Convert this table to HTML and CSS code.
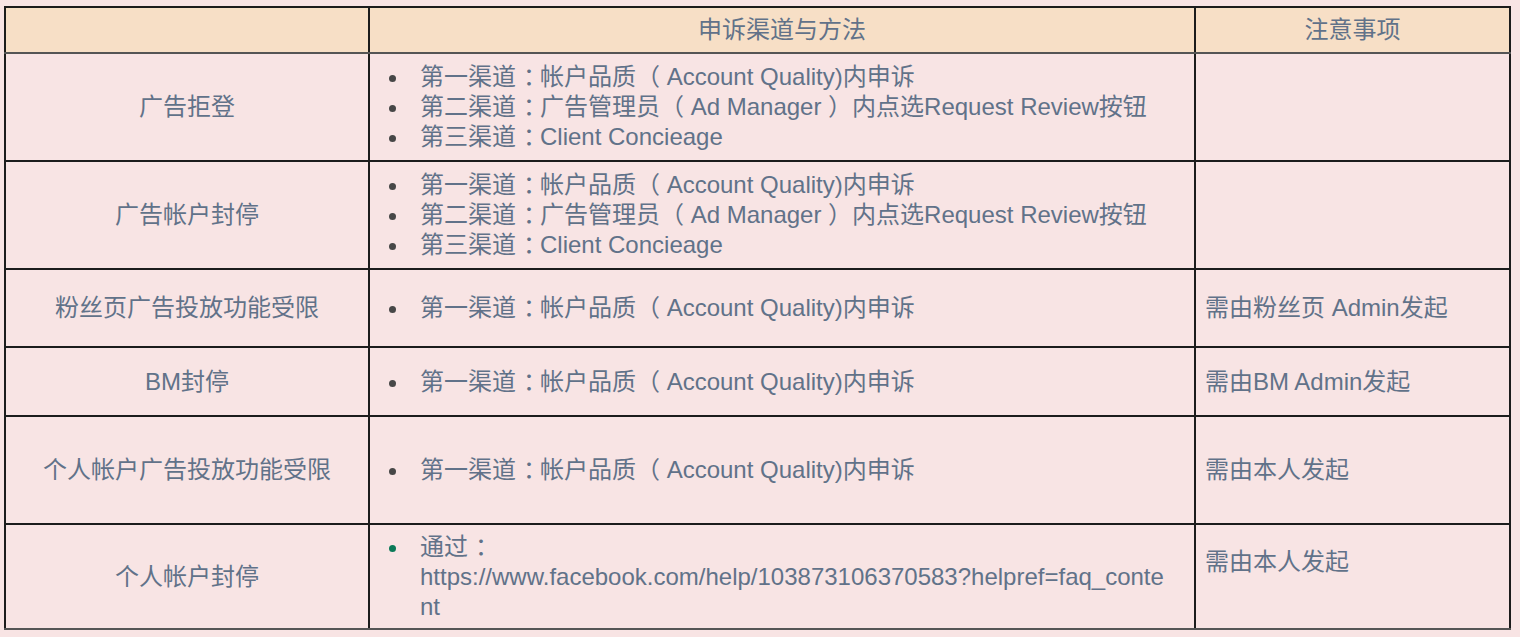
FILE: index.html
```html
<!DOCTYPE html>
<html lang="zh-CN">
<head>
  <meta charset="UTF-8" />
  <title>申诉渠道与方法</title>
  <link rel="stylesheet" href="styles.css">
</head>
<body>
  <table class="appeal-table">
    <colgroup>
      <col class="col-type">
      <col class="col-method">
      <col class="col-note">
    </colgroup>
    <thead>
      <tr class="row-head">
        <th></th>
        <th>申诉渠道与方法</th>
        <th>注意事项</th>
      </tr>
    </thead>
    <tbody>
      <tr class="row-tall">
        <td class="type">广告拒登</td>
        <td class="method">
          <ul>
            <li>第一渠道<span class="fw">：</span>帐户品质（ Account Quality)内申诉</li>
            <li>第二渠道<span class="fw">：</span>广告管理员（ Ad Manager ）内点选Request Review按钮</li>
            <li>第三渠道<span class="fw">：</span>Client Concieage</li>
          </ul>
        </td>
        <td class="note"></td>
      </tr>
      <tr class="row-tall">
        <td class="type">广告帐户封停</td>
        <td class="method">
          <ul>
            <li>第一渠道<span class="fw">：</span>帐户品质（ Account Quality)内申诉</li>
            <li>第二渠道<span class="fw">：</span>广告管理员（ Ad Manager ）内点选Request Review按钮</li>
            <li>第三渠道<span class="fw">：</span>Client Concieage</li>
          </ul>
        </td>
        <td class="note"></td>
      </tr>
      <tr class="row-mid">
        <td class="type">粉丝页广告投放功能受限</td>
        <td class="method">
          <ul>
            <li>第一渠道<span class="fw">：</span>帐户品质（ Account Quality)内申诉</li>
          </ul>
        </td>
        <td class="note">需由粉丝页 Admin发起</td>
      </tr>
      <tr class="row-short">
        <td class="type">BM封停</td>
        <td class="method">
          <ul>
            <li>第一渠道<span class="fw">：</span>帐户品质（ Account Quality)内申诉</li>
          </ul>
        </td>
        <td class="note">需由BM Admin发起</td>
      </tr>
      <tr class="row-tall">
        <td class="type">个人帐户广告投放功能受限</td>
        <td class="method">
          <ul>
            <li>第一渠道<span class="fw">：</span>帐户品质（ Account Quality)内申诉</li>
          </ul>
        </td>
        <td class="note">需由本人发起</td>
      </tr>
      <tr class="row-last">
        <td class="type">个人帐户封停</td>
        <td class="method">
          <ul>
            <li class="green">通过<span class="fw">：</span><span class="url">https://www.facebook.com/help/103873106370583?helpref=faq_content</span></li>
          </ul>
        </td>
        <td class="note note-raised">需由本人发起</td>
      </tr>
    </tbody>
  </table>
</body>
</html>
```

FILE: styles.css
```css
* {
  box-sizing: border-box;
}
body {
  margin: 0;
  padding: 6px 0 0 4px;
  background: #f8e4e4;
  font-family: "Liberation Sans", "Noto Sans CJK SC", sans-serif;
  font-size: 24px;
  line-height: 30px;
  color: #617289;
}
.appeal-table {
  width: 1505px;
  border-collapse: collapse;
  table-layout: fixed;
  background: #f8e4e4;
}
.col-type { width: 364px; }
.col-method { width: 826px; }
.col-note { width: 315px; }
th, td {
  border: 2px solid #1c1c1c;
  padding: 0;
  vertical-align: middle;
}
th {
  background: #f7dfc6;
  font-weight: normal;
  text-align: center;
  border-bottom-color: #555;
}
.row-head { height: 46px; }
.row-tall { height: 108px; }
.row-mid { height: 78px; }
.row-short { height: 69px; }
.row-last { height: 105px; }
.row-last td { border-bottom-color: #555; }
.type {
  text-align: center;
}
.method ul {
  list-style: none;
  margin: 0;
  padding: 0 24px 0 50px;
}
.method li::before {
  content: "";
  display: inline-block;
  width: 7px;
  height: 7px;
  border-radius: 50%;
  background: #474747;
  margin: 0 24px 0 -31px;
  vertical-align: middle;
}
.method li.green::before {
  background: #0b7a58;
}
/* full-width colon drawn centred in its box */
.fw {
  padding-left: 7px;
  letter-spacing: -7px;
}
.url {
  display: block;
  word-break: break-all;
}
.note {
  padding: 0 9px;
}
.note-raised {
  padding-bottom: 30px;
}
```
